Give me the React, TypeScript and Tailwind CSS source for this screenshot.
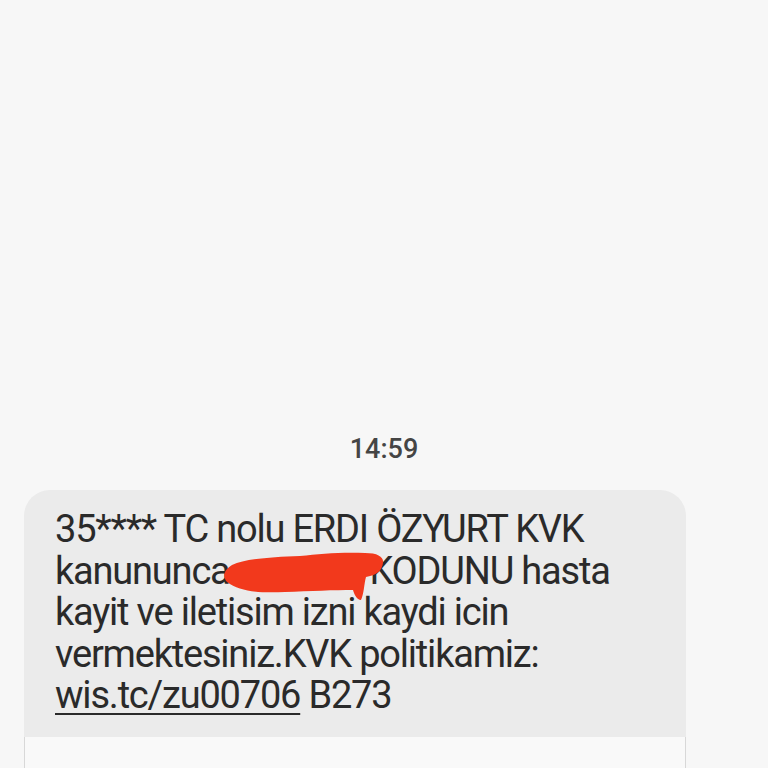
export default function App() {
  return (
    <div
      className="w-[768px] h-[768px] overflow-hidden bg-[#f7f7f7] flex flex-col"
      style={{ fontFamily: "Roboto, 'Liberation Sans', sans-serif" }}
    >
      <div className="h-[431px] shrink-0" />
      <div className="text-center text-[27px] leading-[36px] font-medium text-[#454545]">14:59</div>
      <div className="h-[23px] shrink-0" />
      <div className="ml-[24px] w-[662px] relative shrink-0">
        <div className="bg-[#ebebeb] rounded-t-[26px] pl-[31px] pr-[16px] pt-[19px] pb-[20px] text-[38px] leading-[41.5px] text-[#2a2a2a] tracking-[-1.2px] whitespace-nowrap">
          <p>35**** TC nolu ERDI ÖZYURT KVK</p>
          <p>
            kanununca<span className="inline-block w-[140px]" />KODUNU hasta
          </p>
          <p>kayit ve iletisim izni kaydi icin</p>
          <p>vermektesiniz.KVK politikamiz:</p>
          <p>
            <span className="underline underline-offset-[5px] decoration-[2px]">wis.tc/zu00706</span> B273
          </p>
        </div>
        {/* red marker over the hidden code */}
        <svg className="absolute left-[176px] top-[60px]" width="190" height="55" viewBox="0 0 190 55">
          <path
            d="M27 32 C22 26 24 20 32 15 C45 9 70 7 100 6 C120 4 140 2 165 3 C178 3 184 7 183 13 C182 20 178 25 166 27 C164 34 164 44 161 50 C157 50 154 44 153 40 C135 40 110 41 85 42 C60 43 40 42 27 32 Z"
            fill="#f2391c"
          />
        </svg>
        <div className="h-[40px] bg-[#f9f9f9] border-x border-[#d8d8d8]" />
      </div>
    </div>
  );
}
